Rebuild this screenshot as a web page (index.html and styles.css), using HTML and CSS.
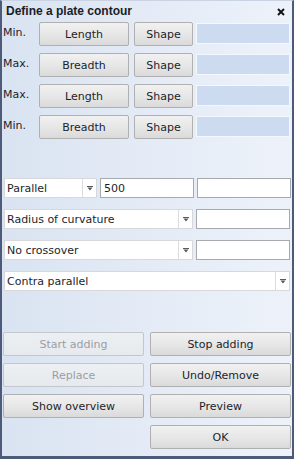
FILE: index.html
```html
<!DOCTYPE html>
<html>
<head>
<meta charset="utf-8">
<link rel="stylesheet" href="styles.css">
</head>
<body>
<div class="window">
  <div class="titlebar">
    <span class="title">Define a plate contour</span>
    <svg class="close" width="8" height="8" viewBox="0 0 8 8"><path d="M1 1L7 7M7 1L1 7" stroke="#111" stroke-width="1.9" fill="none"/></svg>
  </div>

  <div class="dims">
    <div class="dim-row">
      <span class="lbl">Min.</span>
      <button class="btn btn-dim">Length</button>
      <button class="btn btn-shape">Shape</button>
      <div class="field"></div>
    </div>
    <div class="dim-row">
      <span class="lbl">Max.</span>
      <button class="btn btn-dim">Breadth</button>
      <button class="btn btn-shape">Shape</button>
      <div class="field"></div>
    </div>
    <div class="dim-row">
      <span class="lbl">Max.</span>
      <button class="btn btn-dim">Length</button>
      <button class="btn btn-shape">Shape</button>
      <div class="field"></div>
    </div>
    <div class="dim-row">
      <span class="lbl">Min.</span>
      <button class="btn btn-dim">Breadth</button>
      <button class="btn btn-shape">Shape</button>
      <div class="field"></div>
    </div>
  </div>

  <div class="combos">
    <div class="combo-row">
      <div class="combo combo-small"><span class="combo-text">Parallel</span><span class="arrow-box"><svg width="6" height="5" viewBox="0 0 6 5"><path d="M0 0H6V1H0Z M0.5 1.5H5.5L3 4.5Z" fill="#5a5a5a"/></svg></span></div>
      <div class="input">500</div>
      <div class="input"></div>
    </div>
    <div class="combo-row">
      <div class="combo combo-mid"><span class="combo-text">Radius of curvature</span><span class="arrow-box"><svg width="6" height="5" viewBox="0 0 6 5"><path d="M0 0H6V1H0Z M0.5 1.5H5.5L3 4.5Z" fill="#5a5a5a"/></svg></span></div>
      <div class="input"></div>
    </div>
    <div class="combo-row">
      <div class="combo combo-mid"><span class="combo-text">No crossover</span><span class="arrow-box"><svg width="6" height="5" viewBox="0 0 6 5"><path d="M0 0H6V1H0Z M0.5 1.5H5.5L3 4.5Z" fill="#5a5a5a"/></svg></span></div>
      <div class="input"></div>
    </div>
    <div class="combo-row">
      <div class="combo combo-full"><span class="combo-text">Contra parallel</span><span class="arrow-box"><svg width="6" height="5" viewBox="0 0 6 5"><path d="M0 0H6V1H0Z M0.5 1.5H5.5L3 4.5Z" fill="#5a5a5a"/></svg></span></div>
    </div>
  </div>

  <div class="actions">
    <button class="btn btn-act" disabled>Start adding</button>
    <button class="btn btn-act">Stop adding</button>
    <button class="btn btn-act" disabled>Replace</button>
    <button class="btn btn-act">Undo/Remove</button>
    <button class="btn btn-act">Show overview</button>
    <button class="btn btn-act">Preview</button>
    <span></span>
    <button class="btn btn-act">OK</button>
  </div>
</div>
</body>
</html>
```

FILE: styles.css
```css
* { box-sizing: border-box; }
html, body { margin: 0; padding: 0; }
body {
  width: 294px;
  height: 459px;
  font-family: "DejaVu Sans", Verdana, sans-serif;
  font-size: 11px;
  color: #1b1f2c;
}
.window {
  width: 294px;
  height: 459px;
  border-style: solid;
  border-color: #4d5b78;
  border-width: 1px 2px 3px 2px;
  border-top-color: #c9d3e2;
  background: linear-gradient(90deg, #d9e3f1 0%, #e4ebf6 50%, #edf2fa 100%);
  display: flex;
  flex-direction: column;
}
.titlebar {
  height: 21px;
  display: flex;
  align-items: center;
  justify-content: space-between;
  padding: 0 7px 1px 4px;
}
.title {
  font-family: "Liberation Sans", Arial, sans-serif;
  font-weight: bold;
  font-size: 12px;
  color: #1a1d28;
}
.close { margin-top: 1px; }

.dims {
  display: flex;
  flex-direction: column;
  gap: 7px;
}
.dim-row {
  display: flex;
  height: 24px;
  align-items: flex-start;
}
.lbl {
  width: 37px;
  padding: 4px 0 0 1px;
  color: #1b1f2c;
}
.btn {
  font-family: inherit;
  font-size: 11px;
  color: #1b1f2c;
  height: 24px;
  padding: 0;
  border: 1px solid #b0b0b0;
  border-radius: 2px;
  background: linear-gradient(180deg, #f1f1f1 0%, #e6e6e6 55%, #dadada 100%);
}
.btn:disabled {
  color: #9a9ea6;
  border-color: #c3c6cb;
  background: linear-gradient(180deg, #edf0f3 0%, #e6e9ed 100%);
}
.btn-dim { width: 90px; }
.btn-shape { width: 59px; margin-left: 5px; }
.field {
  width: 94px;
  height: 21px;
  margin: 1px 0 0 3px;
  background: #cddbf0;
  border: 1px solid #f4f7fc;
}

.combos {
  margin-top: 39px;
  display: flex;
  flex-direction: column;
  gap: 11px;
  padding-left: 2px;
}
.combo-row {
  display: flex;
  height: 20px;
}
.combo {
  height: 20px;
  display: flex;
  background: #fff;
  border: 1px solid #d6d8dc;
}
.combo-text {
  flex: 1;
  padding: 3px 0 0 2px;
  white-space: nowrap;
  overflow: hidden;
}
.arrow-box {
  width: 14px;
  border-left: 1px solid #dcdcdc;
  display: flex;
  align-items: center;
  justify-content: center;
}
.combo-small { width: 93px; }
.combo-mid { width: 189px; }
.combo-full { width: 286px; }
.input {
  width: 94px;
  height: 20px;
  margin-left: 3px;
  background: #fff;
  border: 1px solid #a6a9ae;
  padding: 3px 0 0 3px;
}

.actions {
  margin-top: 41px;
  display: grid;
  grid-template-columns: 141px 141px;
  column-gap: 6px;
  row-gap: 7px;
  padding-left: 1px;
}
.btn-act { width: 141px; }
```
